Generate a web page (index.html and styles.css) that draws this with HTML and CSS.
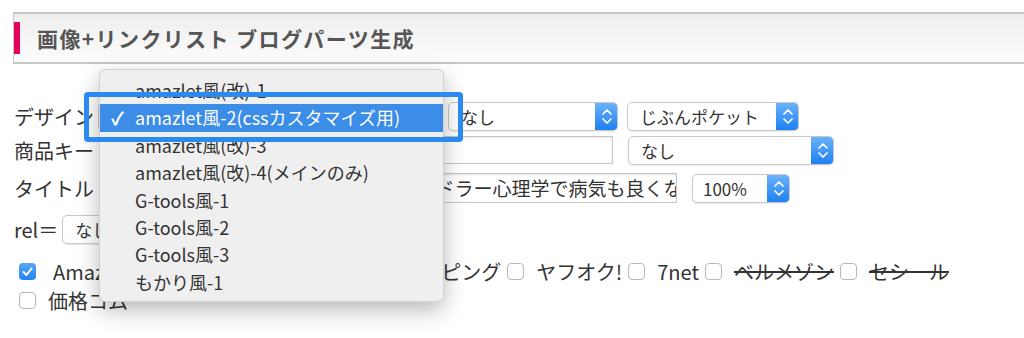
FILE: index.html
```html
<!DOCTYPE html>
<html lang="ja">
<head>
  <meta charset="UTF-8" />
  <meta name="viewport" content="width=device-width, initial-scale=1.0"/>
  <title>画像+リンクリスト ブログパーツ生成</title>
  <link rel="stylesheet" href="styles.css">
</head>
<body>
<div class="page">

  <div class="header">
    <h2>画像+リンクリスト ブログパーツ生成</h2>
  </div>

  <div class="form">
    <div class="row row-design">
      <span class="label">デザイン</span>
      <div class="select design-select">
        <span class="value">amazlet風-2(cssカスタマイズ用)</span>
        <span class="stepper"><svg width="22" height="27" viewBox="0 0 22 27"><polyline points="7,11 11,7 15,11"/><polyline points="7,16 11,20 15,16"/></svg></span>
      </div>
      <div class="select link-select">
        <span class="value">なし</span>
        <span class="stepper"><svg width="22" height="27" viewBox="0 0 22 27"><polyline points="7,11 11,7 15,11"/><polyline points="7,16 11,20 15,16"/></svg></span>
      </div>
      <div class="select pocket-select">
        <span class="value">じぶんポケット</span>
        <span class="stepper"><svg width="22" height="27" viewBox="0 0 22 27"><polyline points="7,11 11,7 15,11"/><polyline points="7,16 11,20 15,16"/></svg></span>
      </div>
    </div>

    <div class="row row-key">
      <span class="label">商品キー</span>
      <div class="text-input key-input">4062199300</div>
      <div class="select key-select">
        <span class="value">なし</span>
        <span class="stepper"><svg width="22" height="27" viewBox="0 0 22 27"><polyline points="7,11 11,7 15,11"/><polyline points="7,16 11,20 15,16"/></svg></span>
      </div>
    </div>

    <div class="row row-title">
      <span class="label">タイトル</span>
      <div class="text-input title-input">書評 嫌われる勇気 自己啓発の源流「アドラー心理学で病気も良くなる」</div>
      <div class="select size-select">
        <span class="value">100%</span>
        <span class="stepper"><svg width="22" height="27" viewBox="0 0 22 27"><polyline points="7,11 11,7 15,11"/><polyline points="7,16 11,20 15,16"/></svg></span>
      </div>
    </div>

    <div class="row row-rel">
      <span class="label">rel＝</span>
      <div class="select rel-select">
        <span class="value">なし</span>
        <span class="stepper"><svg width="22" height="27" viewBox="0 0 22 27"><polyline points="7,11 11,7 15,11"/><polyline points="7,16 11,20 15,16"/></svg></span>
      </div>
    </div>

    <div class="row row-shops">
      <label class="check first"><span class="box checked"><svg width="17" height="17" viewBox="0 0 17 17"><polyline points="4.5,9 7.5,12 12.5,5.5"/></svg></span>Amazon</label>
      <label class="check"><span class="box"></span>楽天ブックス</label>
      <label class="check"><span class="box"></span>Yahoo!ショッピング</label>
      <label class="check"><span class="box"></span>ヤフオク!</label>
      <label class="check"><span class="box"></span>7net</label>
      <label class="check"><span class="box"></span><s>ベルメゾン</s></label>
      <label class="check"><span class="box"></span><s>セシール</s></label>
    </div>

    <div class="row row-price">
      <label class="check"><span class="box"></span>価格コム</label>
    </div>
  </div>

  <!-- open select menu of デザイン -->
  <ul class="popup">
    <li>amazlet風(改)-1</li>
    <li class="selected"><span class="tick">✓</span>amazlet風-2(cssカスタマイズ用)</li>
    <li>amazlet風(改)-3</li>
    <li>amazlet風(改)-4(メインのみ)</li>
    <li>G-tools風-1</li>
    <li>G-tools風-2</li>
    <li>G-tools風-3</li>
    <li>もかり風-1</li>
  </ul>
  <div class="focus-ring"></div>

</div>
</body>
</html>
```

FILE: styles.css
```css
body {
  margin: 0;
  font-family: "Noto Sans CJK JP", "Noto Sans", sans-serif;
  color: #333;
  background: #fff;
}
.page {
  position: relative;
  height: 338px;
  overflow: hidden;
}

/* header */
.header {
  margin: 12px 0 0 13px;
  padding: 8px 0;
  border-top: 2px solid #c6c6c6;
  border-bottom: 2px solid #c6c6c6;
  border-left: 1px solid #c6c6c6;
  background: linear-gradient(#eeeeee, #fcfcfc);
}
.header h2 {
  margin: 0;
  height: 32px;
  line-height: 32px;
  padding-left: 17px;
  border-left: 6px solid #e4005b;
  font-size: 21px;
  letter-spacing: 1.4px;
  font-weight: bold;
  color: #555;
}

/* form rows */
.form {
  padding-left: 14px;
  margin-top: 36px;
}
.row {
  display: flex;
  align-items: center;
  height: 32px;
}
.row-key { margin-top: 2px; }
.row-title { margin-top: 6px; }
.row-rel { margin-top: 9px; }
.row-shops { margin-top: 12px; height: 28px; }
.row-price { margin-top: 1px; height: 28px; }

.label {
  font-size: 20px;
  white-space: nowrap;
}

/* selects */
.select {
  display: flex;
  align-items: center;
  flex-shrink: 0;
  height: 29px;
  box-sizing: border-box;
  border: 1px solid #c9c9c9;
  border-radius: 5px;
  background: #fff;
  box-shadow: 0 1px 1px rgba(0, 0, 0, 0.08);
  font-size: 17px;
  overflow: hidden;
}
.select .value {
  flex: 1;
  padding-left: 12px;
  white-space: nowrap;
  overflow: hidden;
}
.stepper {
  width: 23px;
  height: 29px;
  margin: -1px -1px -1px 0;
  display: flex;
  align-items: center;
  justify-content: center;
  background: linear-gradient(#6db4fb, #1b7ff1);
  border-radius: 0 5px 5px 0;
}
.stepper svg polyline {
  fill: none;
  stroke: #fff;
  stroke-width: 1.7;
  stroke-linecap: round;
  stroke-linejoin: round;
}
.design-select { margin-left: 4px; width: 340px; }
.link-select { margin-left: 10px; width: 170px; }
.pocket-select { margin-left: 9px; width: 172px; }
.key-select { margin-left: 15px; width: 206px; }
.size-select { margin-left: 15px; width: 98px; }
.size-select .value { padding-left: 10px; }
.rel-select { margin-left: 4px; width: 110px; }

/* text inputs */
.text-input {
  box-sizing: border-box;
  flex-shrink: 0;
  height: 28px;
  line-height: 26px;
  padding: 0 4px;
  border: 1px solid #c6c6c6;
  box-shadow: inset 0 1px 2px rgba(0, 0, 0, 0.1);
  background: #fff;
  font-size: 19px;
  white-space: nowrap;
  overflow: hidden;
}
.key-input { margin-left: 6px; width: 513px; }
.title-input { margin-left: 6px; width: 577px; height: 30px; line-height: 28px; }

/* checkboxes */
.check {
  display: inline-flex;
  align-items: center;
  flex-shrink: 0;
  font-size: 20px;
  margin-right: 6px;
  white-space: nowrap;
}
.check:first-child { margin-left: 5px; }
.box {
  flex-shrink: 0;
  width: 17px;
  height: 17px;
  box-sizing: border-box;
  border: 1px solid #b8b8b8;
  border-radius: 4px;
  background: #fff;
  margin-right: 12px;
}
.check.first .box { margin-right: 17px; }
.box.checked {
  border: none;
  background: linear-gradient(#5aa6f7, #1f84f2);
}
.box svg {
  display: block;
}
.box svg polyline {
  fill: none;
  stroke: #fff;
  stroke-width: 2;
  stroke-linecap: round;
  stroke-linejoin: round;
}
.check s {
  text-decoration-thickness: 1.5px;
}

/* open menu */
.popup {
  position: absolute;
  left: 99px;
  top: 69px;
  width: 345px;
  margin: 0;
  padding: 7px 0 6px;
  list-style: none;
  background: #efefef;
  border: 1px solid rgba(0, 0, 0, 0.12);
  box-sizing: border-box;
  height: 233px;
  border-radius: 6px;
  box-shadow: 0 8px 22px rgba(0, 0, 0, 0.28);
  font-size: 18px;
  color: #333;
}
.popup li {
  height: 27.4px;
  line-height: 27.4px;
  padding-left: 35px;
  position: relative;
  white-space: nowrap;
}
.popup li.selected {
  background: #3b8de7;
  color: #fff;
}
.tick {
  position: absolute;
  left: 11px;
  top: 0;
  font-weight: bold;
}
.focus-ring {
  position: absolute;
  left: 84px;
  top: 92px;
  width: 379px;
  height: 50px;
  box-sizing: border-box;
  border: 5px solid #2b8af2;
  border-radius: 4px;
}
```
